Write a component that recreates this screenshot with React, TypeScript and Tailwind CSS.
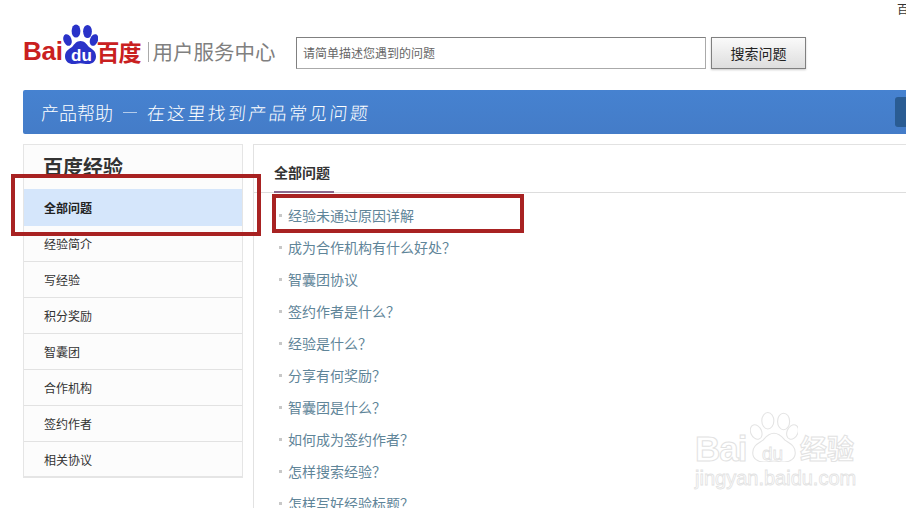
const sideItems = ['经验简介', '写经验', '积分奖励', '智囊团', '合作机构', '签约作者', '相关协议'];

const questions = [
  '经验未通过原因详解',
  '成为合作机构有什么好处？',
  '智囊团协议',
  '签约作者是什么？',
  '经验是什么？',
  '分享有何奖励？',
  '智囊团是什么？',
  '如何成为签约作者？',
  '怎样搜索经验？',
  '怎样写好经验标题？',
];

function Paw({ className, outline }: { className: string; outline?: boolean }) {
  const fill = outline ? '#ffffff' : '#2932c8';
  const stroke = outline ? '#e4e4e4' : 'none';
  return (
    <svg viewBox="0 0 35 40" preserveAspectRatio="none" className={className}>
      <g fill={fill} stroke={stroke} strokeWidth={outline ? 0.8 : 0}>
        <ellipse cx="4.5" cy="16" rx="4" ry="6" transform="rotate(-20 4.5 16)" />
        <ellipse cx="13" cy="7" rx="4.4" ry="6.6" />
        <ellipse cx="24.5" cy="7.5" rx="4.4" ry="6.6" />
        <ellipse cx="31" cy="16" rx="4" ry="6" transform="rotate(20 31 16)" />
        <path d="M17.5 17c4 0 6 3 8 5.500c3 2.500 7.500 4 7.500 10c0 5-4 7.500-8 7.500c-3 0-5-.8-7.500-.8s-4.500.8-7.500.8c-4 0-8-2.500-8-7.500c0-6 4.500-7.500 7.500-10c2-2.500 4-5.500 8-5.500z" />
      </g>
    </svg>
  );
}

export default function App() {
  return (
    <div className="relative h-[508px] w-[906px] overflow-hidden bg-white font-['Noto_Sans_CJK_SC',sans-serif]">
      {/* top bar */}
      <div className="flex h-[18px] justify-end">
        <span className="mr-[-3px] text-[12px] leading-[18px] text-[#333]">百</span>
      </div>

      {/* header */}
      <div className="flex h-[72px] items-start pl-[23px] pt-[19px]">
        <div className="relative flex h-[32px] w-[273px] items-center">
          <span className="mt-[-4px] font-['Liberation_Sans',sans-serif] text-[26px] font-bold leading-none tracking-[-0.3px] text-[#c9201f]">
            Bai
          </span>
          <Paw className="mt-[-18px] h-[40px] w-[35px]" />
          <span className="ml-[-1px] mt-[-4px] text-[23px] font-bold leading-none tracking-[-1px] text-[#c9201f]">百度</span>
          <span className="ml-[7px] mt-[-3px] h-[20px] w-px bg-[#aaa]" />
          <span className="ml-[4px] mt-[-3px] whitespace-nowrap text-[20.5px] leading-none text-[#808080]">用户服务中心</span>
          <span className="absolute left-[48px] top-[10px] font-['Liberation_Sans',sans-serif] text-[17px] font-bold leading-none text-white">
            du
          </span>
        </div>
        <div className="flex h-[32px] w-[410px] items-center border border-[#aaa] border-t-[#808080] border-l-[#808080] bg-white pl-[6px] text-[12px] text-[#666]">
          请简单描述您遇到的问题
        </div>
        <button className="ml-[5px] h-[32px] w-[95px] border border-[#808080] bg-gradient-to-b from-[#fafafa] to-[#dedede] text-[14px] text-[#222] shadow-[0_1px_2px_#ccc]">
          搜索问题
        </button>
      </div>

      {/* banner */}
      <div className="ml-[23px] flex h-[44px] items-center justify-between rounded-l-[2px] bg-gradient-to-b from-[#4682d0] to-[#447cc8] pl-[18px]">
        <div className="flex items-center text-white">
          <span className="text-[18px] font-light leading-none">产品帮助</span>
          <span className="ml-[10px] w-[14px] border-t border-white/60" />
          <span className="ml-[10px] -skew-x-6 text-[18px] font-light leading-none tracking-[2.3px]">
            在这里找到产品常见问题
          </span>
        </div>
        <div className="h-[30px] w-[11px] rounded-l-[3px] bg-[#2a5c93]" />
      </div>

      {/* body */}
      <div className="ml-[23px] mt-[10px] flex items-start">
        <aside className="w-[220px] border-x border-t border-b-2 border-[#e5e5e5] bg-[#fcfcfc]">
          <h2 className="h-[44px] pl-[19px] pt-[7px] text-[20px] font-bold leading-[30px] text-[#333]">百度经验</h2>
          <div className="h-[37px] bg-[#d5e6fb] pl-[20px] text-[12px] font-bold leading-[37px] text-[#222]">全部问题</div>
          <ul>
            {sideItems.map((item, i) => (
              <li
                key={item}
                className={`pl-[20px] text-[12px] leading-[35px] text-[#333] ${
                  i === sideItems.length - 1 ? 'h-[34px]' : 'h-[36px] border-b border-[#e2e2e2]'
                }`}
              >
                {item}
              </li>
            ))}
          </ul>
        </aside>

        <main className="ml-[10px] h-[364px] flex-1 border-l border-t border-[#e2e2e2]">
          <div className="relative h-[48px] border-b border-[#ddd] pl-[20px] pt-[15px] text-[14px] font-bold leading-[24px] text-[#333]">
            全部问题
            <span className="absolute bottom-[-1px] left-[20px] h-[2px] w-[60px] bg-[#8a6a8e]" />
          </div>
          <ul className="pt-[6px]">
            {questions.map((q) => (
              <li key={q} className="flex h-[32px] items-center pl-[25px] text-[14px] text-[#5f8599]">
                <span className="mr-[6px] h-[3px] w-[3px] bg-[#c8c8c8]" />
                {q}
              </li>
            ))}
          </ul>
        </main>
      </div>

      {/* annotation boxes */}
      <div className="absolute left-[11px] top-[174px] h-[62px] w-[250px] border-[4px] border-[#a82222]" />
      <div className="absolute left-[272px] top-[194px] h-[39px] w-[252px] border-[4px] border-[#a82222]" />

      {/* watermark */}
      <div className="absolute left-[694px] top-[410px] h-[80px] w-[170px]">
        <span className="absolute left-[1px] top-[19px] font-['Liberation_Sans',sans-serif] text-[35px] font-bold leading-[40px] tracking-[-1px] text-white [-webkit-text-stroke:1px_#e2e2e2]">
          Bai
        </span>
        <Paw outline className="absolute left-[56px] top-[2px] h-[50px] w-[48px]" />
        <span className="absolute left-[68px] top-[34px] font-['Liberation_Sans',sans-serif] text-[19px] leading-none text-white [-webkit-text-stroke:0.8px_#e2e2e2]">
          du
        </span>
        <span className="absolute left-[106px] top-[20px] whitespace-nowrap text-[27px] font-bold leading-[36px] text-white [-webkit-text-stroke:1px_#e2e2e2]">
          经验
        </span>
        <span className="absolute left-[1px] top-[58px] whitespace-nowrap font-['Liberation_Sans',sans-serif] text-[20px] leading-none text-white [-webkit-text-stroke:0.8px_#e2e2e2]">
          jingyan.baidu.com
        </span>
      </div>
    </div>
  );
}
